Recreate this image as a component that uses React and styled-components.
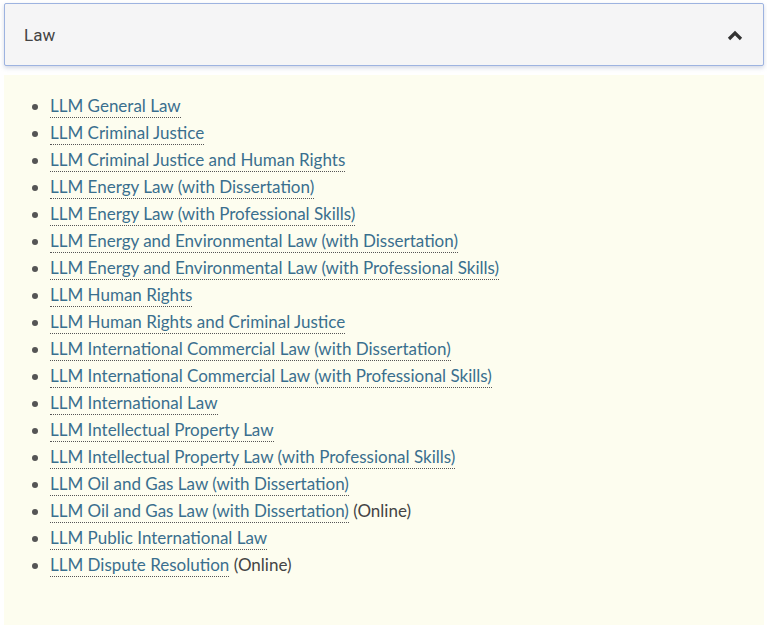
import React from 'react';
import styled, { createGlobalStyle } from 'styled-components';

const Global = createGlobalStyle`
  body {
    margin: 0;
    background: #ffffff;
    font-family: "Lato", "Noto Sans", sans-serif;
  }
`;

const Wrap = styled.div`
  padding: 3px 3px 0 4px;
`;

const Header = styled.button`
  display: flex;
  align-items: center;
  justify-content: space-between;
  width: 100%;
  height: 63px;
  padding: 0 20px 0 19px;
  box-sizing: border-box;
  background: #f5f5f6;
  border: 1px solid #9db3e0;
  border-radius: 2px;
  box-shadow: 0 2px 4px rgba(80, 100, 150, 0.25);
  font-family: "Roboto", "Lato", sans-serif;
  font-size: 17px;
  color: #444;
  cursor: pointer;
`;

const Panel = styled.div`
  margin-top: 9px;
  background: #fdfdef;
  padding: 17px 0 47px 0;
`;

const List = styled.ul`
  margin: 0;
  padding-left: 46px;
  color: #444;
`;

const Item = styled.li`
  font-size: 17px;
  line-height: 27px;
  color: #444;
  &::marker {
    color: #555;
  }
`;

const Link = styled.a`
  color: #3a6f8e;
  text-decoration: none;
  border-bottom: 1px dotted #555;
  padding-bottom: 1px;
`;

const Chevron = () => (
  <svg width="16" height="12" viewBox="0 0 16 12">
    <path d="M2 10 L8 4 L14 10" fill="none" stroke="#333" strokeWidth="3.2" />
  </svg>
);

const courses = [
  ['LLM General Law'],
  ['LLM Criminal Justice'],
  ['LLM Criminal Justice and Human Rights'],
  ['LLM Energy Law (with Dissertation)'],
  ['LLM Energy Law (with Professional Skills)'],
  ['LLM Energy and Environmental Law (with Dissertation)'],
  ['LLM Energy and Environmental Law (with Professional Skills)'],
  ['LLM Human Rights'],
  ['LLM Human Rights and Criminal Justice'],
  ['LLM International Commercial Law (with Dissertation)'],
  ['LLM International Commercial Law (with Professional Skills)'],
  ['LLM International Law'],
  ['LLM Intellectual Property Law'],
  ['LLM Intellectual Property Law (with Professional Skills)'],
  ['LLM Oil and Gas Law (with Dissertation)'],
  ['LLM Oil and Gas Law (with Dissertation)', '(Online)'],
  ['LLM Public International Law'],
  ['LLM Dispute Resolution', '(Online)'],
];

export default function App() {
  return (
    <Wrap>
      <Global />
      <Header>
        <span>Law</span>
        <Chevron />
      </Header>
      <Panel>
        <List>
          {courses.map(([name, note], i) => (
            <Item key={i}>
              <Link href="#">{name}</Link>
              {note && ' ' + note}
            </Item>
          ))}
        </List>
      </Panel>
    </Wrap>
  );
}
